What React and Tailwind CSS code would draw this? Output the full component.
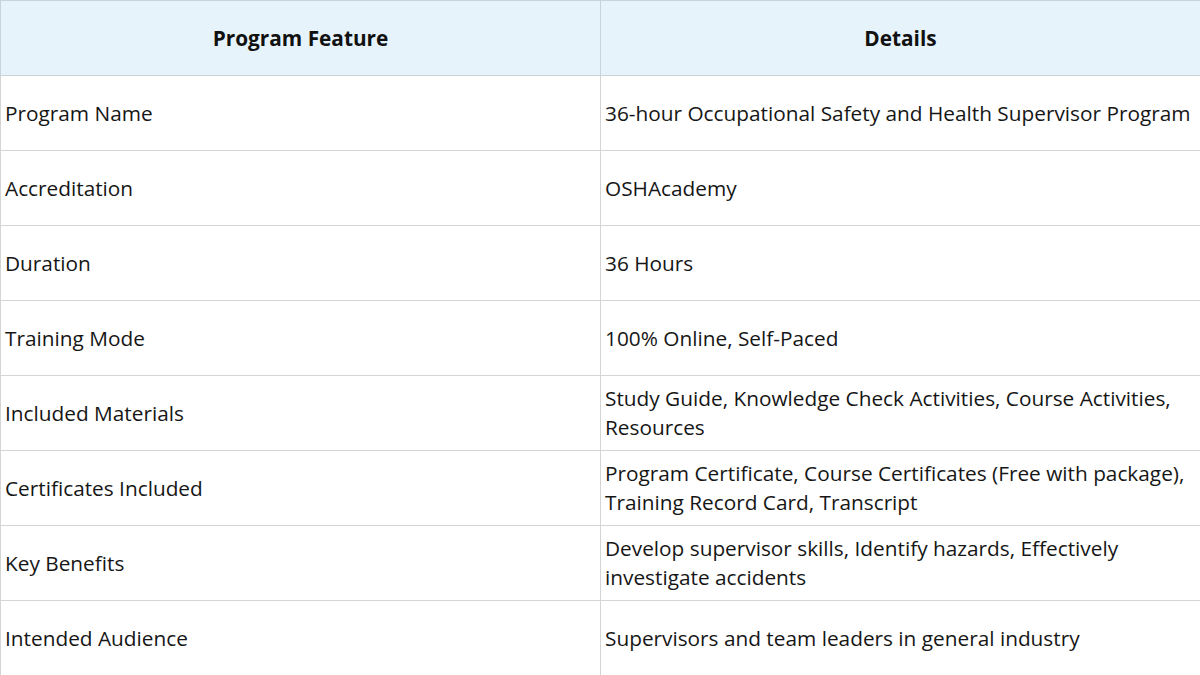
const rows = [
  ["Program Name", "36-hour Occupational Safety and Health Supervisor Program"],
  ["Accreditation", "OSHAcademy"],
  ["Duration", "36 Hours"],
  ["Training Mode", "100% Online, Self-Paced"],
  ["Included Materials", "Study Guide, Knowledge Check Activities, Course Activities, Resources"],
  ["Certificates Included", "Program Certificate, Course Certificates (Free with package), Training Record Card, Transcript"],
  ["Key Benefits", "Develop supervisor skills, Identify hazards, Effectively investigate accidents"],
  ["Intended Audience", "Supervisors and team leaders in general industry"],
];

export default function App() {
  return (
    <div className="w-[1200px] h-[675px] bg-white overflow-hidden font-['Open_Sans',sans-serif] text-[20.8px] leading-[29px] text-[#161616]">
      <table className="w-[1200px] table-fixed border-collapse">
        <colgroup>
          <col className="w-[600px]" />
          <col className="w-[600px]" />
        </colgroup>
        <thead>
          <tr className="bg-[#e6f3fb]">
            <th className="h-[75px] border border-[#c9d3da] font-bold text-center text-[#111]">Program Feature</th>
            <th className="h-[75px] border border-[#c9d3da] font-bold text-center text-[#111]">Details</th>
          </tr>
        </thead>
        <tbody>
          {rows.map(([feature, details]) => (
            <tr key={feature}>
              <td className="h-[75px] border border-[#d4d4d4] px-[4px] align-middle">{feature}</td>
              <td className="h-[75px] border border-[#d4d4d4] px-[4px] align-middle">{details}</td>
            </tr>
          ))}
        </tbody>
      </table>
    </div>
  );
}
